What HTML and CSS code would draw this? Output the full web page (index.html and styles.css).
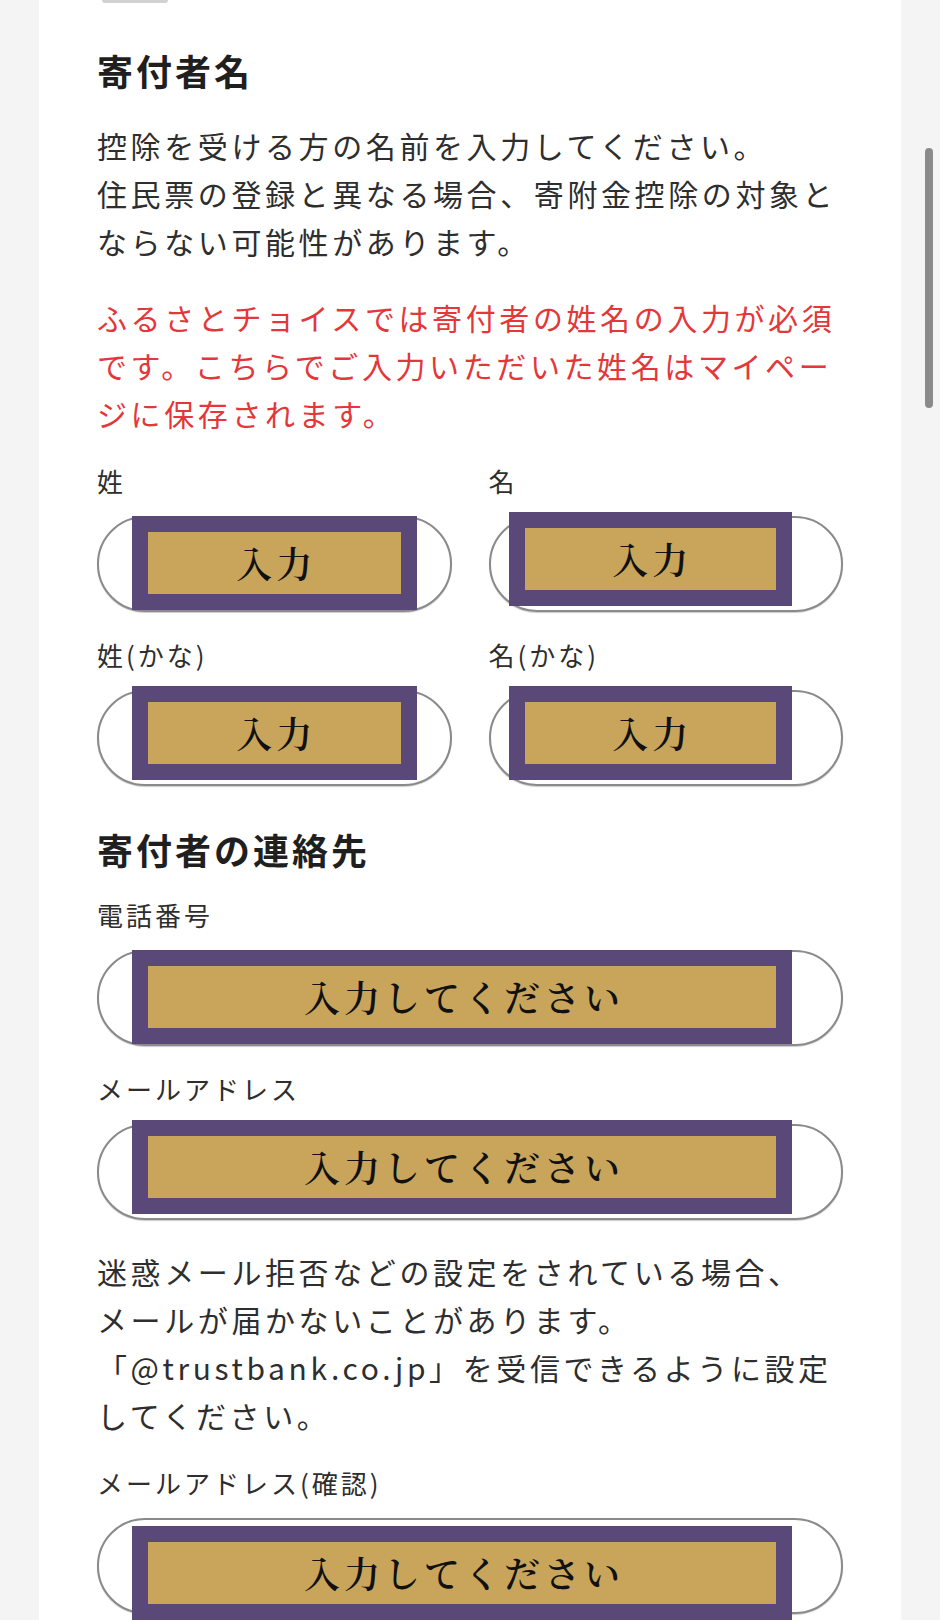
FILE: index.html
```html
<!DOCTYPE html>
<html lang="ja">
<head>
    <meta charset="UTF-8">
    <meta name="viewport" content="width=device-width, initial-scale=1.0">
    <title>寄付者情報の入力</title>
    <link rel="stylesheet" href="styles.css">
</head>
<body>
    <div class="sheet">
        <div class="tab-edge"></div>

        <section class="block">
            <h2 class="block-title">寄付者名</h2>
            <p class="lead">控除を受ける方の名前を入力してください。<br>住民票の登録と異なる場合、寄附金控除の対象とならない可能性があります。</p>
            <p class="lead lead-alert">ふるさとチョイスでは寄付者の姓名の入力が必須です。こちらでご入力いただいた姓名はマイページに保存されます。</p>

            <div class="name-grid">
                <div class="field">
                    <label class="field-label">姓</label>
                    <div class="pill">
                        <div class="mask mask-half"><span>入力</span></div>
                    </div>
                </div>
                <div class="field">
                    <label class="field-label">名</label>
                    <div class="pill">
                        <div class="mask mask-shift mask-up"><span>入力</span></div>
                    </div>
                </div>
                <div class="field">
                    <label class="field-label">姓(かな)</label>
                    <div class="pill">
                        <div class="mask mask-half mask-up"><span>入力</span></div>
                    </div>
                </div>
                <div class="field">
                    <label class="field-label">名(かな)</label>
                    <div class="pill">
                        <div class="mask mask-shift mask-up"><span>入力</span></div>
                    </div>
                </div>
            </div>
        </section>

        <section class="block">
            <h2 class="block-title">寄付者の連絡先</h2>

            <div class="field">
                <label class="field-label">電話番号</label>
                <div class="pill">
                    <div class="mask"><span>入力してください</span></div>
                </div>
            </div>

            <div class="field">
                <label class="field-label">メールアドレス</label>
                <div class="pill">
                    <div class="mask mask-up"><span>入力してください</span></div>
                </div>
            </div>

            <p class="lead note">迷惑メール拒否などの設定をされている場合、<br>メールが届かないことがあります。<br>「@trustbank.co.jp」を受信できるように設定してください。</p>

            <div class="field">
                <label class="field-label">メールアドレス(確認)</label>
                <div class="pill">
                    <div class="mask mask-down"><span>入力してください</span></div>
                </div>
            </div>
        </section>
    </div>

    <div class="scroll-thumb"></div>
</body>
</html>
```

FILE: styles.css
```css
:root {
    --bg-color: #f4f4f4;
    --card-bg: #ffffff;
    --title-color: #1f1f1f;
    --text-color: #2e2e2e;
    --alert: #e3373a;
    --pill-border: #8a8a8a;
    --mask-frame: #5a4879;
    --mask-fill: #c8a55a;
}

html, body {
    height: 1620px;
    overflow: hidden;
}

body {
    margin: 0;
    background-color: var(--bg-color);
    color: var(--text-color);
    font-family: "Noto Sans CJK JP", "Noto Sans", sans-serif;
}

.sheet {
    margin: 0 39px;
    min-height: 1620px;
    padding: 0 58px;
    background-color: var(--card-bg);
}

/* bottom edge of the tab button scrolled off above */
.tab-edge {
    width: 66px;
    height: 3px;
    margin-left: 5px;
    background-color: #d2d2d2;
    border-radius: 0 0 6px 6px;
}

.block + .block {
    margin-top: 38px;
}

.block-title {
    margin: 42px 0 26px;
    font-size: 36px;
    line-height: 50px;
    font-weight: bold;
    letter-spacing: 3px;
    color: var(--title-color);
}

.block + .block .block-title {
    margin-top: 0;
    margin-bottom: 23px;
}

.lead {
    margin: 0 0 28px;
    font-size: 30px;
    line-height: 48px;
    letter-spacing: 3.6px;
}

.lead-alert {
    color: var(--alert);
    margin-bottom: 26px;
}

.note {
    margin: 27px 0 26px;
}

.name-grid {
    display: grid;
    grid-template-columns: 1fr 1fr;
    column-gap: 37px;
    row-gap: 25px;
}

.field + .field {
    margin-top: 25px;
}

.name-grid .field + .field {
    margin-top: 0;
}

.field-label {
    display: block;
    margin-bottom: 17px;
    font-size: 26px;
    line-height: 36px;
    letter-spacing: 3px;
    color: var(--text-color);
}

.pill {
    position: relative;
    box-sizing: border-box;
    height: 96px;
    border: 2px solid var(--pill-border);
    border-radius: 48px;
    background-color: #fff;
    box-shadow: 0 1px 1px rgba(0, 0, 0, 0.2);
}

/* framed placeholder laid over each input */
.mask {
    position: absolute;
    top: -2px;
    left: 33px;
    right: 49px;
    height: 94px;
    box-sizing: border-box;
    border: 16px solid var(--mask-frame);
    background-color: var(--mask-fill);
    display: flex;
    align-items: center;
    justify-content: center;
}

.mask span {
    font-family: "Noto Serif CJK JP", "Liberation Serif", serif;
    font-size: 36px;
    font-weight: 600;
    line-height: 62px;
    letter-spacing: 4px;
    color: #111;
    padding-left: 4px;
}

.mask-half {
    right: 33px;
}

.mask-shift {
    left: 18px;
}

.mask-up {
    top: -6px;
}

.mask-down {
    top: 6px;
}

.scroll-thumb {
    position: fixed;
    top: 148px;
    right: 7px;
    width: 8px;
    height: 260px;
    border-radius: 4px;
    background-color: #8a8a8a;
}
```
